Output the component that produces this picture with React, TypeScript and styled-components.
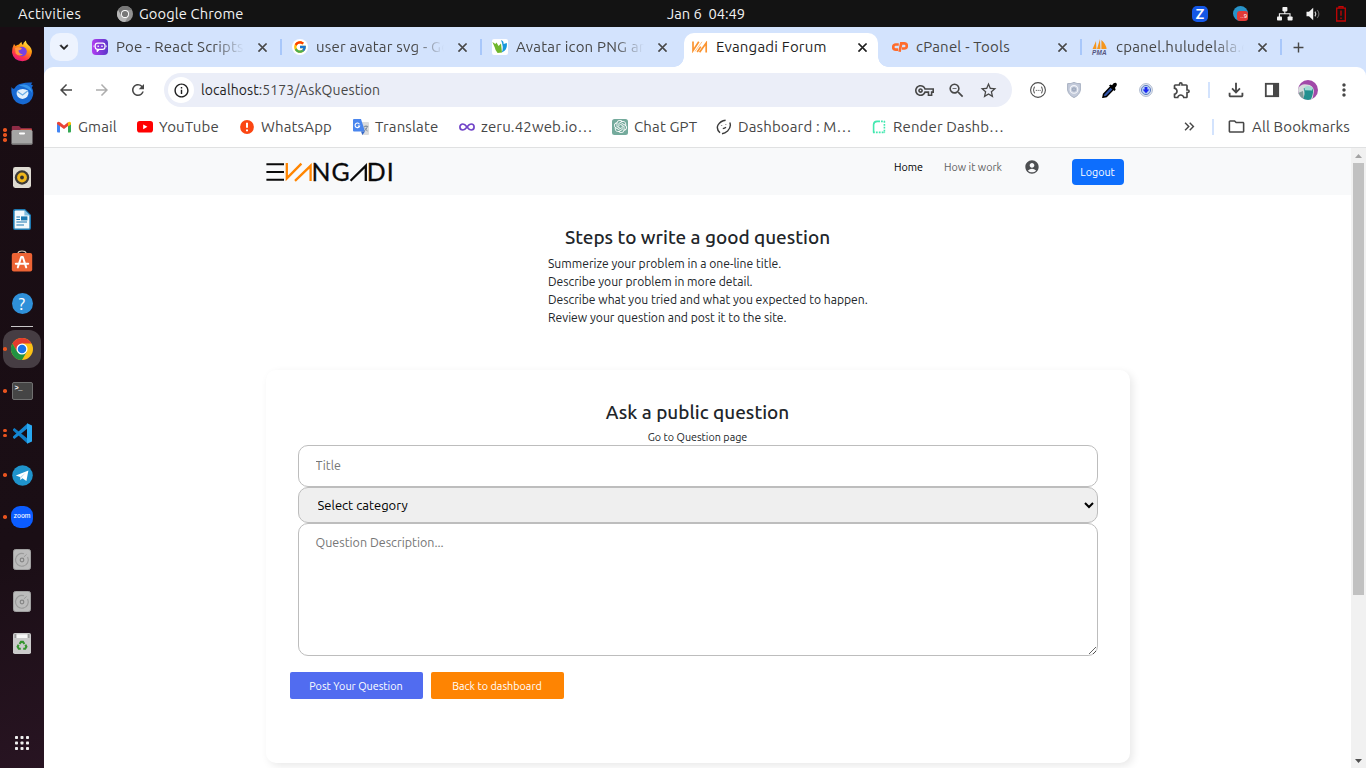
import React from "react";
import styled, { createGlobalStyle, css } from "styled-components";
import {
  MdArrowBack, MdArrowForward, MdRefresh, MdInfoOutline, MdOutlineVpnKey, MdOutlineZoomOut,
  MdStarOutline, MdOutlineExtension, MdOutlineFileDownload, MdMoreVert, MdAccountCircle,
  MdOutlineFolder, MdKeyboardDoubleArrowRight, MdClose, MdAdd, MdKeyboardArrowDown,
} from "react-icons/md";
import { FcGoogle } from "react-icons/fc";
import { SiOpenai } from "react-icons/si";

const GlobalStyle = createGlobalStyle`
  * { box-sizing: border-box; }
  body { margin: 0; overflow: hidden; background: #fff; }
  body, input, select, textarea, button { font-family: Ubuntu, "Noto Sans", "Open Sans", sans-serif; }
  svg { display: block; flex: none; }
`;

const Desktop = styled.div`
  width: 1366px; height: 768px; display: flex; flex-direction: column; overflow: hidden;
  font-size: 15px; letter-spacing: 0.14px; color: #474747;
`;

/* ---------- system bar ---------- */
const SystemBar = styled.header`
  height: 27px; flex: none; display: flex; align-items: center; background: #131313;
  color: #f2f2f2; font-size: 14.67px; white-space: pre;
`;
const SystemLeft = styled.div`
  width: 667px; padding-left: 18px; display: flex; align-items: center;
`;
const Activities = styled.span` width: 99px; letter-spacing: 0.3px; `;
const AppName = styled.span` margin-left: 6px; `;
const Clock = styled.span` letter-spacing: 0; `;
const Tray = styled.div`
  margin-left: auto; padding-right: 3px; display: flex; align-items: center;
`;
const TrayItem = styled.span<{ $w: number }>`
  width: ${p => p.$w}px; display: flex; justify-content: center;
`;

const Workspace = styled.div` flex: 1; min-height: 0; display: flex; `;

/* ---------- dock ---------- */
const DockBar = styled.nav`
  width: 44px; flex: none; padding: 3px 0 4px; display: flex; flex-direction: column;
  background: linear-gradient(165deg, #190d13 0%, #1a0e15 70%, #281422 100%);
`;
const DockItem = styled.div<{ $last?: boolean }>`
  position: relative; height: 42px; flex: none; display: flex; align-items: center; justify-content: center;
  ${p => p.$last && css`margin-top: auto;`}
`;
const DockTile = styled.span<{ $active?: boolean }>`
  width: 38px; height: 38px; border-radius: 12px; display: flex; align-items: center; justify-content: center;
  ${p => p.$active && css`background: #463d43;`}
`;
const RunDots = styled.span`
  position: absolute; left: 3px; top: 0; bottom: 0; display: flex; flex-direction: column;
  justify-content: center; gap: 1.5px;
`;
const RunDot = styled.i` width: 3.6px; height: 3.6px; border-radius: 50%; background: #e9541f; `;
const DockRule = styled.div` height: 1px; width: 22px; margin: 2px auto 1px; background: #c9c6c8; flex: none; `;

/* ---------- browser ---------- */
const Browser = styled.main` flex: 1; min-width: 0; display: flex; flex-direction: column; background: #d3e3fd; `;
const TabStrip = styled.div` height: 40px; flex: none; padding: 6px 0 0 6px; display: flex; letter-spacing: 0.2px; `;
const TabSearch = styled.button`
  width: 28px; height: 28px; margin-right: 6px; padding: 0; border: 0; border-radius: 10px; background: #edf3fe;
  display: flex; align-items: center; justify-content: center; color: #1f1f1f;
  path:not([fill="none"]) { stroke: currentColor; stroke-width: 1; }
`;
const TabBox = styled.div<{ $active?: boolean }>`
  position: relative; width: 194px; height: 34px; margin-right: 6px; padding: 0 8px 6px; display: flex; align-items: center;
  color: ${p => (p.$active ? "#1f1f1f" : "#474747")};
  ${p => p.$active && css`
    background: #fff; border-radius: 10px 10px 0 0;
    &::before, &::after { content: ""; position: absolute; bottom: 0; width: 10px; height: 10px; }
    &::before { left: -10px; background: radial-gradient(circle at 0 0, transparent 9.5px, #fff 10px); }
    &::after { right: -10px; background: radial-gradient(circle at 100% 0, transparent 9.5px, #fff 10px); }
  `}
`;
const TabLabel = styled.span<{ $fade?: boolean }>`
  width: 128px; margin: 0 11px 0 8px; overflow: hidden; white-space: nowrap; line-height: 22px;
  ${p => p.$fade && css`mask-image: linear-gradient(90deg, #000 calc(100% - 30px), transparent);`}
`;
const TabRule = styled.i` position: absolute; right: -4px; top: 6px; width: 2px; height: 16px; background: #a8c7fa; `;
const NewTab = styled.span` width: 28px; height: 28px; display: flex; align-items: center; justify-content: center; `;
const CloseIcon = styled(MdClose)`
  path:not([fill="none"]) { stroke: currentColor; stroke-width: 0.8; }
`;

const Toolbar = styled.div`
  height: 46px; flex: none; padding-left: 4px; display: flex; align-items: center; background: #fff;
  border-radius: 9px 9px 0 0;
`;
const ToolSlot = styled.span<{ $w?: number; $dim?: boolean }>`
  width: ${p => p.$w ?? 36}px; flex: none; display: flex; align-items: center; justify-content: center;
  color: ${p => (p.$dim ? "#adadad" : "#474747")};
`;
const AddressBar = styled.div`
  width: 848px; height: 34px; margin: 0 8px; padding: 0 8px 0 4px; display: flex; align-items: center;
  border-radius: 17px; background: #ebeef8;
`;
const SiteInfo = styled.span`
  width: 26px; height: 26px; border-radius: 50%; background: #fff; color: #1f1f1f;
  display: flex; align-items: center; justify-content: center;
`;
const Url = styled.span` flex: 1; padding-left: 7px; font-size: 14px; letter-spacing: 0.09px; color: #474747; `;
const UrlHost = styled.span` color: #1f1f1f; `;
const ToolRule = styled.i` width: 2px; height: 16px; background: #d3e3fd; `;

const Bookmarks = styled.div`
  height: 35px; flex: none; padding: 0 0 7px 12px; display: flex; align-items: center; background: #fff;
  border-bottom: 1px solid #e0e1e2;
`;
const Bookmark = styled.span<{ $w: number }>`
  width: ${p => p.$w}px; display: flex; align-items: center; gap: 6px; white-space: nowrap;
`;
const BookmarkTail = styled.div` margin-left: auto; padding-right: 15px; display: flex; align-items: center; `;
const AllBookmarks = styled.span` display: flex; align-items: center; gap: 6px; padding-left: 5px; width: 129px; white-space: nowrap; `;

const Viewport = styled.div` flex: 1; min-height: 0; display: flex; background: #fff; `;
const Page = styled.div`
  flex: 1; min-width: 0; overflow: hidden; background: #fff; color: #212529; font-size: 12.13px;
  line-height: 18px; letter-spacing: 0;
`;

/* ---------- scrollbar ---------- */
const ScrollTrack = styled.div` width: 15px; flex: none; display: flex; flex-direction: column; align-items: center; background: #f1f1f1; `;
const ScrollThumb = styled.div` width: 11px; height: 432px; background: #c1c1c1; `;
const ScrollArrow = styled.span<{ $down?: boolean }>`
  width: 15px; height: 15px; display: flex; align-items: center; justify-content: center; flex: none;
  ${p => p.$down && css`margin-top: auto;`}
`;

/* ---------- forum page ---------- */
const SiteNav = styled.div` height: 47px; background: #f8f9fa; `;
const Container = styled.div` width: 864px; margin: 0 auto; display: flex; `;
const NavBrand = styled.div` padding-top: 15px; width: 628.5px; height: 47px; `;
const NavLink = styled.a<{ $active?: boolean; $w: number }>`
  width: ${p => p.$w}px; padding-top: 10px; font-size: 10.75px; color: ${p => (p.$active ? "#000" : "#5f6061")};
`;
const NavUser = styled.span` width: 48px; padding-top: 11px; color: #4d4f51; `;
const LogoutButton = styled.button`
  width: 52px; height: 26px; margin-top: 11px; padding: 0; border: 0; border-radius: 4px; background: #0d6efd;
  color: #fff; font-size: 10.7px;
`;
const Steps = styled.section` width: 342px; margin: 31px auto 0; `;
const Heading = styled.h4`
  margin: 0 0 7px; font-size: 18.95px; line-height: 22px; font-weight: 500;
  text-align: center; white-space: nowrap;
`;
const StepList = styled.ul` list-style: none; margin: 0; padding: 0 0 0 21.5px; white-space: nowrap; `;
const Card = styled.section`
  width: 864px; height: 393px; margin: 43px auto 0; padding: 31px 32px 0; border-radius: 10px; background: #fff;
  box-shadow: 3px 3px 8px rgba(0, 0, 0, 0.09);
`;
const QuestionLink = styled.a` display: block; line-height: 15px; font-size: 10.75px; text-align: center; `;
const Fields = styled.form` display: flex; flex-direction: column; `;
const field = css`
  width: 800px; margin: 0; border: 1px solid #bdbdbd; border-radius: 10px; outline: none;
`;
const TitleInput = styled.input` ${field} height: 42px; padding: 0 17px 2px; font-size: 12.5px; background: #fff; `;
const CategorySelect = styled.select` ${field} height: 36px; padding: 0 0 0 15px; font-size: 13px; color: #000; background: #efefef; `;
const Description = styled.textarea` ${field} height: 133px; padding: 10px 17px; font-size: 12.5px; line-height: 17px; background: #fff; `;
const Actions = styled.div` display: flex; gap: 8px; margin: 16px 0 0 -8px; `;
const ActionButton = styled.button<{ $tone: "primary" | "accent" }>`
  width: 133px; height: 27px; padding: 0; border: 0; border-radius: 2px; color: #fff; font-size: 10.8px;
  background: ${p => (p.$tone === "primary" ? "#516cf0" : "#fe8402")};
`;

/* ---------- drawings ---------- */
const ChromeMark = ({ size, mono }: { size: number; mono?: boolean }) => (
  <svg width={size} height={size} viewBox="0 0 48 48">
    <circle cx="24" cy="24" r="24" fill={mono ? "#929292" : "#fbc116"} />
    <path d="M24 12 H44.8 A24 24 0 0 0 3.2 12 L13.6 30 L24 24 Z" fill={mono ? "#777" : "#e33b2e"} />
    <path d="M3.2 12 A24 24 0 0 0 24 48 L34.4 30 L13.6 30 Z" fill={mono ? "#b5b5b5" : "#229342"} />
    <circle cx="24" cy="24" r="12" fill="#fff" />
    <circle cx="24" cy="24" r="9.3" fill={mono ? "#777" : "#1a73e8"} />
  </svg>
);

const FirefoxMark = () => (
  <svg width="22" height="22" viewBox="0 0 22 22">
    <defs>
      <linearGradient id="ff" x1="0.8" y1="0" x2="0.3" y2="1">
        <stop offset="0" stopColor="#fff44f" /><stop offset=".4" stopColor="#ff980e" />
        <stop offset=".75" stopColor="#ff3647" /><stop offset="1" stopColor="#e31587" />
      </linearGradient>
    </defs>
    <path d="M3 4 L4.6 6 Q6 4.6 8 4.4 Q9 2.6 10.6 2 Q10.4 4 12 5 Q12.6 2.4 14.8 .6 Q15 3 17 4.8 Q21.4 8 20.8 13 Q19.6 20.6 11.4 21.2 Q2.4 21 1 12.6 Q.8 8 3 4Z" fill="url(#ff)" />
    <circle cx="11" cy="11.6" r="4.8" fill="#7542e5" />
    <path d="M4 8 Q8 6 11 8.6 Q10 10.4 7.4 10.4 Q8 14 12 14 Q8 17.4 4.6 13.4Z" fill="#ff9640" />
  </svg>
);
const ThunderbirdMark = () => (
  <svg width="23" height="23" viewBox="0 0 23 23">
    <path d="M.6 5 Q1.6 7.4 3.4 6.4 Q6 2 11 1.4 Q15 .2 21.4 .6 L20 2.4 L22 3.6 L20.8 5.4 Q23 9 22 13.6 Q20 21.6 12 22.4 Q3 21.6 1.2 13.6 Q-.2 9 .6 5Z" fill="#1769d2" />
    <path d="M8 3.4 Q15 .8 19 5 Q21 7.6 21 11 Q18 5.4 8 3.4Z" fill="#3796ee" />
    <path d="M6 9 Q11.4 5 17 8.6 Q18.4 13 15 15.8 Q11.4 18 8 15.8 Q4.6 13 6 9Z" fill="#e4f1fd" />
    <path d="M6.4 9.4 L11.6 13 L16.8 8.8" fill="none" stroke="#6aaee8" strokeWidth="1.2" />
  </svg>
);
const FilesMark = () => (
  <svg width="22" height="20" viewBox="0 0 22 20">
    <path d="M1.4 1 H8 L10 3 H20 Q21 3 21 4 V9 H.8 V2Z" fill="#8d2b45" />
    <path d="M10 4 H20.6 V8 H6Z" fill="#c4503f" />
    <rect x=".5" y="5" width="21" height="14.5" rx="1.6" fill="#a5a5a5" />
    <rect x=".5" y="18" width="21" height="1.6" rx=".8" fill="#858585" />
    <rect x="8" y="7.4" width="6" height="2" rx=".8" fill="#fff" />
  </svg>
);
const RhythmboxMark = () => (
  <svg width="18" height="21" viewBox="0 0 18 21">
    <rect width="18" height="21" rx="2.4" fill="#dedbd2" />
    <circle cx="9" cy="10.5" r="7.2" fill="#3c3a37" />
    <circle cx="9" cy="10.5" r="4.9" fill="#efb71b" />
    <circle cx="9" cy="10.5" r="1.9" fill="#33312e" />
  </svg>
);
const WriterMark = () => (
  <svg width="18" height="21" viewBox="0 0 18 21">
    <path d="M2 0 H12 L18 6 V19 Q18 21 16 21 H2 Q0 21 0 19 V2 Q0 0 2 0Z" fill="#1d79b1" />
    <path d="M2.4 1.6 H11.4 L16.4 6.4 V19.4 H1.6 V2.4Z" fill="#f4f9fc" />
    <path d="M11.4 1 L17 6.4 H11.4Z" fill="#83bedf" />
    <path d="M3.4 8 H7 M3.4 10.5 H7 M3.4 13 H14 M3.4 16 H11" stroke="#1d79b1" strokeWidth="1.2" />
    <rect x="8" y="7.4" width="6.4" height="4" fill="#1d79b1" />
  </svg>
);
const SoftwareMark = () => (
  <svg width="22" height="22" viewBox="0 0 22 22">
    <path d="M7 3 Q7.4 1 11 1 Q14.6 1 15 3" fill="none" stroke="#d9c9b6" strokeWidth="1.2" />
    <rect x=".8" y="3" width="20.4" height="18.4" rx="2" fill="#ed6435" />
    <path d="M6.8 17.4 L10.2 7 H11.8 L15.2 17.4 M4.8 13.8 H17.2" fill="none" stroke="#fff" strokeWidth="2" strokeLinejoin="round" strokeLinecap="round" />
  </svg>
);
const HelpBadge = styled.span`
  width: 21px; height: 21px; border-radius: 50%; background: #2f90d9; color: #fff; font-size: 17px; line-height: 21px; text-align: center;
`;
const TerminalTile = styled.span`
  width: 21px; height: 18px; padding: 1px 2px; border: 1px solid #707070; border-radius: 2px; background: #454545; color: #fff;
  font: bold 7px/8px "Liberation Mono", monospace; letter-spacing: -0.5px;
`;
const CodeMark = () => (
  <svg width="21" height="21" viewBox="0 0 21 21">
    <path d="M1 6.3 L2.4 5 L15.4 15.6 V20.4 L1 7.4Z" fill="#0f7dc7" />
    <path d="M1 14.7 L2.4 16 L15.4 5.4 V.6 L1 13.6Z" fill="#1588d4" />
    <path d="M15 .3 L20 2.4 V18.6 L15 20.7Z" fill="#29a9f2" />
  </svg>
);
const TelegramMark = () => (
  <svg width="21" height="21" viewBox="0 0 21 21">
    <circle cx="10.5" cy="10.5" r="10.3" fill="#1f93cc" />
    <path d="M3.8 10.4 L16.4 5.4 L14.4 16 L10.4 13.2 L8.4 15 L8 12Z" fill="#fff" />
    <path d="M8 12 L14 7.4 L9.4 12.6 L8.4 15Z" fill="#b8dbee" />
  </svg>
);
const ZoomBadge = styled.span`
  width: 22px; height: 22px; border-radius: 9px; background: #0b5cff; color: #fff; font: 500 6.4px/21px Inter, sans-serif;
  letter-spacing: 0; text-align: center;
`;
const DiskMark = () => (
  <svg width="18" height="21" viewBox="0 0 18 21">
    <rect x=".5" y=".5" width="17" height="20" rx="2" fill="#bcbcbc" stroke="#a0a0a0" />
    <path d="M14.6 8 A6.4 6.4 0 1 1 11 4.8" fill="none" stroke="#9a9a9a" strokeWidth="1.2" />
    <path d="M10.8 8 L13.6 5.4" stroke="#9a9a9a" strokeWidth="1" />
    <circle cx="9" cy="11" r="1.8" fill="none" stroke="#858585" strokeWidth="1.2" />
  </svg>
);
const TrashMark = () => (
  <svg width="18" height="21" viewBox="0 0 18 21">
    <rect width="18" height="21" rx="1.8" fill="#cbcbcb" />
    <path d="M1.5 1 H16.5 V5 H1.5Z" fill="#9b9b9b" /><path d="M3.4 1.2 H14.6 V5 H3.4Z" fill="#f7f7f7" />
    <path d="M6.6 11 L8 8.9 H10 L11.4 11 M12.4 11.6 L13.4 13.8 L12.2 15.8 H10.2 M7.8 15.8 H5.8 L4.6 13.8 L5.6 11.8" fill="none" stroke="#36952f" strokeWidth="2.1" />
  </svg>
);
const AppGrid = () => (
  <svg width="14" height="14" viewBox="0 0 14 14" fill="#f0f0f0">
    {[0, 5.5, 11].map(y => [0, 5.5, 11].map(x => <rect key={`${x}-${y}`} x={x} y={y} width="3" height="3" rx="0.8" />))}
  </svg>
);

const ZBadge = styled.span`
  width: 16px; height: 16px; border-radius: 5px; background: #1457e6; color: #fff; font: bold 14px/16px Lato, sans-serif; text-align: center;
`;
const ChatTray = styled.span` position: relative; width: 15px; height: 15px; border-radius: 50%; background: #2893c9; `;
const ChatCount = styled.b`
  position: absolute; left: 4px; top: 5px; width: 11px; height: 10px; border-radius: 3px; background: #e23a36; color: #fff;
  font: 6px/10px "Liberation Sans", sans-serif; letter-spacing: 0; text-align: right; padding-right: 1px;
`;
const NetworkMark = () => (
  <svg width="16" height="14" viewBox="0 0 16 14" fill="#f2f2f2">
    <rect x="5.4" width="5" height="4.4" rx=".8" /><rect y="9.4" width="5" height="4.2" rx=".8" /><rect x="10.6" y="9.4" width="5" height="4.2" rx=".8" />
    <path d="M2.4 10 V6.8 H13 V10 M7.8 4 V7" fill="none" stroke="#f2f2f2" strokeWidth="1.1" />
  </svg>
);
const SpeakerMark = () => (
  <svg width="15" height="14" viewBox="0 0 15 14">
    <path d="M.5 4.8 H3 L7.2 .8 V13.2 L3 9.2 H.5Z" fill="#f2f2f2" />
    <path d="M9 4.6 Q10.6 7 9 9.4" fill="none" stroke="#d2d2d2" strokeWidth="1.2" />
    <path d="M11.2 3 Q14.6 7 11.2 11" fill="none" stroke="#696969" strokeWidth="1.1" />
  </svg>
);
const BatteryMark = () => (
  <svg width="10" height="16" viewBox="0 0 10 16">
    <path d="M3 2 V.7 H7 V2 M.7 2.2 H9.3 V15 H.7Z M5 4.6 V9.8 M5 11.4 V13" fill="none" stroke="#c30505" strokeWidth="1.3" />
  </svg>
);

const PoeMark = () => (
  <svg width="16" height="16" viewBox="0 0 16 16">
    <defs><linearGradient id="poe" x1="0" y1="0" x2="1" y2="0"><stop stopColor="#b03df0" /><stop offset="1" stopColor="#5b36c9" /></linearGradient></defs>
    <rect width="16" height="16" rx="4" fill="url(#poe)" />
    <rect x="3.2" y="4.2" width="9.8" height="6.2" rx="2.4" fill="none" stroke="#fff" strokeWidth="1.2" />
    <path d="M2 6.4 V8.2 M14.2 6.4 V8.2 M5 10.6 V12.8 L7.4 10.8" fill="#fff" stroke="#fff" strokeWidth=".8" />
    <path d="M6.2 6.6 V8 M10 6.6 V8" stroke="#fff" strokeWidth="1.3" />
  </svg>
);
const GoogleDisc = styled.span` width: 16px; height: 16px; border-radius: 50%; background: #fff; display: flex; align-items: center; justify-content: center; `;
const BirdMark = () => (
  <svg width="16" height="16" viewBox="0 0 16 16">
    <rect width="16" height="16" rx="2" fill="#fff" />
    <path d="M.4 3 L3.4 5 L4.4 3.6 L6.6 7 L9 4.6 L10 13.4 L5.6 14 Q3 11 2.8 8.6Z" fill="#6fb62c" />
    <path d="M9 1 Q12 2 11.6 5 L14.8 4 Q15.6 9 12.6 11.8 L9.8 13.6 Q12 8 9 1Z" fill="#1798dc" />
  </svg>
);
const ForumMark = () => (
  <svg width="16" height="12" viewBox="0 0 16 12">
    <path d="M1 .4 V9.6 L6.8 .8 M5.2 11 L8.8 5.6 M7.6 11.2 L14.2 2 V11.4" fill="none" stroke="#fb9430" strokeWidth="1.7" />
    <path d="M3 10.4 L10 .8" stroke="#fdbd7d" strokeWidth=".9" />
  </svg>
);
const CpanelMark = () => (
  <svg width="16" height="12" viewBox="0 0 17 12">
    <path d="M7.2 3.4 H4 A2.7 2.7 0 0 0 4 8.8 H6.4 M8 11 L9.8 2.2 H13 A2.7 2.7 0 0 1 13 7.6 H10.6" fill="none" stroke="#ff6c2c" strokeWidth="2.8" />
  </svg>
);
const SailMark = () => (
  <svg width="16" height="16" viewBox="0 0 16 16" overflow="visible">
    <path d="M4 2 L4.4 10 H.6Z M8 0 L8.4 10 H5Z M9.4 1 Q14 5 14.6 10 H9.4Z" fill="#f5961d" />
    <text x="0" y="15.8" fontFamily="Liberation Sans, sans-serif" fontWeight="700" fontStyle="italic" fontSize="6.4" fill="#55567f">PMA</text>
  </svg>
);

const GmailMark = () => (
  <svg width="16" height="12" viewBox="0 0 16 12">
    <path d="M1 2.4 H4 V11.4 H2 Q1 11.4 1 10.4Z" fill="#4285f4" /><path d="M12 2.4 H15 V10.4 Q15 11.4 14 11.4 H12Z" fill="#34a853" />
    <path d="M1 1.8 Q2.2 0 4 1.2 L8 4.4 L12 1.2 V5 L8 8 L1 3Z" fill="#ea4335" /><path d="M12 1.2 Q14 0 15 1.8 V3.4 L12 5.4Z" fill="#fbbc04" />
  </svg>
);
const YoutubeMark = () => (
  <svg width="16" height="12" viewBox="0 0 16 12"><rect width="16" height="11.6" rx="2.8" fill="#f00" /><path d="M6.2 3.4 V8.2 L10.4 5.8Z" fill="#fff" /></svg>
);
const AlertMark = () => (
  <svg width="16" height="16" viewBox="0 0 16 16">
    <circle cx="8" cy="8" r="6.9" fill="#fb4613" /><path d="M8 3.8 V8.8 M8 10.4 V12.2" stroke="#fff" strokeWidth="2" />
  </svg>
);
const TranslateMark = () => (
  <svg width="16" height="16" viewBox="0 0 16 16">
    <path d="M7 3 H15 Q16 3 16 4 V15 Q16 16 15 16 H9Z" fill="#dcdcdc" />
    <path d="M0 1 Q0 0 1 0 H8 L12 12.6 H1 Q0 12.6 0 11.6Z" fill="#4a86ee" /><path d="M8 12.6 H12 L9.4 16Z" fill="#3367c8" />
    <path d="M6.4 5.2 A2.3 2.3 0 1 0 6.6 7 H4.8" fill="none" stroke="#fff" strokeWidth="1.1" />
    <path d="M10.8 7.4 H15.2 M13 6.4 V7.4 M14.4 7.6 Q13.6 10.6 11.2 12 M11.6 8.6 Q12.6 11 14.6 12" fill="none" stroke="#7b8896" strokeWidth=".9" />
  </svg>
);
const LoopMark = () => (
  <svg width="16" height="16" viewBox="0 0 16 16">
    <path d="M8 8 Q5.8 5 3.9 5 A3 3 0 0 0 3.9 11 Q5.8 11 8 8 Q10.2 5 12.1 5 A3 3 0 0 1 12.1 11 Q10.2 11 8 8Z" fill="none" stroke="#7144c8" strokeWidth="1.7" />
  </svg>
);
const GptTile = styled.span` width: 16px; height: 16px; border-radius: 2.5px; background: #74aa9c; color: #fff; display: flex; align-items: center; justify-content: center; `;
const FaceMark = () => (
  <svg width="16" height="16" viewBox="0 0 16 16" fill="none" stroke="#3b3b3b" strokeWidth="1.4">
    <path d="M4 13.8 Q0 10 2 6 Q4.4 1.8 9.6 1.2" /><path d="M13.8 3.6 Q15.6 8 11.6 12 Q9 14.2 6 14.8" />
    <path d="M5.6 6.4 V6.9 M9.8 5.6 V6.1 M6.8 9.6 Q8.6 9.4 10 8.2" strokeWidth="1.3" />
  </svg>
);
const RenderMark = () => (
  <svg width="16" height="16" viewBox="0 0 16 16" fill="none" stroke="#43e8b0" strokeWidth="1.6">
    <path d="M2.6 13.4 V5.6 Q2.8 2.6 6 2.4 H9" /><path d="M10 2.4 H13.6 M13.4 2 V14 M2 13.4 H14" strokeDasharray="1.8 1.1" />
  </svg>
);

const BracesMark = () => (
  <svg width="16" height="16" viewBox="0 0 16 16" fill="none" stroke="#4d4d4d">
    <circle cx="8" cy="8" r="7.4" strokeWidth="1.1" />
    <path d="M5 4.8 Q4 4.8 4 6 Q4 8 3 8 Q4 8 4 10 Q4 11.2 5 11.2 M11 4.8 Q12 4.8 12 6 Q12 8 13 8 Q12 8 12 10 Q12 11.2 11 11.2" />
    <path d="M5.8 8.4 H10.6" strokeDasharray="1 .9" />
  </svg>
);
const ShieldMark = () => (
  <svg width="14" height="16" viewBox="0 0 14 16" fill="none">
    <path d="M.6 1.6 Q4 2 7 .4 Q10 2 13.4 1.6 V8 Q12.6 13 7 15.6 Q1.4 13 .6 8Z" fill="#c3cada" stroke="#a2acbd" strokeWidth=".9" />
    <circle cx="7" cy="7.4" r="3.8" stroke="#f4f6fa" strokeWidth="1.1" /><circle cx="7" cy="7.4" r="1.7" fill="#b1bacb" stroke="#8794aa" strokeWidth=".6" />
  </svg>
);
const DropperMark = () => (
  <svg width="16" height="16" viewBox="0 0 16 16">
    <path d="M1 15.2 L1.6 12.2 L8.6 4.8 L11.4 7.4 L4.4 14.6Z" fill="#3255a8" stroke="#000" strokeWidth="1.5" />
    <path d="M7 3.4 L8.6 2.4 L10 3.2 Q12 .2 14.2 1 Q16 2.8 13 5.8 L13.6 7.8 L12.4 9Z" fill="#000" />
  </svg>
);
const DownDiscMark = () => (
  <svg width="16" height="16" viewBox="0 0 16 16">
    <circle cx="8" cy="8" r="6.4" fill="#e8ecf6" stroke="#9aa8c2" strokeWidth=".8" /><circle cx="8" cy="8" r="4.6" fill="#b4cdf5" stroke="#5f7fc0" />
    <path d="M6.6 5 H9.4 V7.4 H11.4 L8 11.2 L4.6 7.4 H6.6Z" fill="#1c28f0" />
  </svg>
);
const PanelMark = () => (
  <svg width="16" height="16" viewBox="0 0 16 16"><rect x="1.8" y="1.8" width="12.4" height="12.4" fill="none" stroke="#474747" strokeWidth="1.8" /><rect x="9" y="1.8" width="5" height="12.4" fill="#474747" /></svg>
);
const ProfileMark = () => (
  <svg width="20" height="20" viewBox="0 0 20 20">
    <defs><clipPath id="face"><circle cx="10" cy="10" r="10" /></clipPath></defs>
    <g clipPath="url(#face)">
      <rect width="20" height="20" fill="#a14aa9" />
      <path d="M0 8 Q4 3 9 4.6 Q15 5 16 11 L14.4 20 H0Z" fill="#d6dcdc" />
      <path d="M0 13 L5 11 L6 20 H2Z" fill="#7f9a98" />
      <path d="M5.6 8.6 Q10 5 15 9 Q15.6 14 12.6 20 H5 Q7.6 13 5.6 8.6Z" fill="#23908f" />
      <path d="M6.6 7 Q11 4.6 15 8 L14 10.4 L6.8 10.2Z" fill="#a3dcd4" />
    </g>
  </svg>
);

const BrandMark = () => (
  <svg width="130" height="28" viewBox="0 0 130 28" overflow="visible" role="img" aria-label="Evangadi">
    <path d="M0.4 1.2 H18 M0.4 9 H18 M0.4 16.8 H18" stroke="#0a0a0a" strokeWidth="2.1" />
    <path d="M20.8 0 V15.4 L35.4 .6 M29 17.8 L44.6 2.8 V18" fill="none" stroke="#ff8500" strokeWidth="2.3" />
    <path d="M84.6 17.8 L99.8 2.8 V18" fill="none" stroke="#0a0a0a" strokeWidth="2.3" />
    <g fontFamily="Lato, sans-serif" fontSize="24.8" fill="#0a0a0a" stroke="#0a0a0a" strokeWidth="0.3">
      <text x="45.6" y="17.9">N</text><text x="65.6" y="17.9">G</text><text x="100.8" y="17.9">D</text><text x="120.8" y="17.9">I</text>
    </g>
  </svg>
);

/* ---------- data ---------- */
const tabs = [
  { label: "Poe - React Scripts E", icon: <PoeMark />, fade: true, rule: true },
  { label: "user avatar svg - Go", icon: <GoogleDisc><FcGoogle size={14} /></GoogleDisc>, fade: true, rule: true },
  { label: "Avatar icon PNG an", icon: <BirdMark />, fade: true },
  { label: "Evangadi Forum", icon: <ForumMark />, active: true },
  { label: "cPanel - Tools", icon: <CpanelMark />, rule: true },
  { label: "cpanel.huludelala.c", icon: <SailMark />, fade: true, rule: true },
];
const bookmarks = [
  { label: "Gmail", w: 81, icon: <GmailMark /> },
  { label: "YouTube", w: 102, icon: <YoutubeMark /> },
  { label: "WhatsApp", w: 114, icon: <AlertMark /> },
  { label: "Translate", w: 106, icon: <TranslateMark /> },
  { label: "zeru.42web.io…", w: 153, icon: <LoopMark /> },
  { label: "Chat GPT", w: 104, icon: <GptTile><SiOpenai size={13} /></GptTile> },
  { label: "Dashboard : M…", w: 155, icon: <FaceMark /> },
  { label: "Render Dashb…", w: 150, icon: <RenderMark /> },
];
const dockTop = [
  { icon: <FirefoxMark />, dots: 0 }, { icon: <ThunderbirdMark />, dots: 0 }, { icon: <FilesMark />, dots: 3 },
  { icon: <RhythmboxMark />, dots: 0 }, { icon: <WriterMark />, dots: 0 }, { icon: <SoftwareMark />, dots: 0 },
  { icon: <HelpBadge>?</HelpBadge>, dots: 0 },
];
const dockRunning = [
  { icon: <ChromeMark size={22} />, dots: 1, active: true }, { icon: <TerminalTile>&gt;_</TerminalTile>, dots: 1 },
  { icon: <CodeMark />, dots: 2 }, { icon: <TelegramMark />, dots: 1 }, { icon: <ZoomBadge>zoom</ZoomBadge>, dots: 1 },
  { icon: <DiskMark />, dots: 0 }, { icon: <DiskMark />, dots: 0 }, { icon: <TrashMark />, dots: 0 },
];
const steps = [
  "Summerize your problem in a one-line title.",
  "Describe your problem in more detail.",
  "Describe what you tried and what you expected to happen.",
  "Review your question and post it to the site.",
];

type DockEntryProps = { icon: React.ReactNode; dots: number; active?: boolean };
const DockEntry = ({ icon, dots, active }: DockEntryProps) => (
  <DockItem>
    {dots > 0 && <RunDots>{Array.from({ length: dots }, (_, i) => <RunDot key={i} />)}</RunDots>}
    <DockTile $active={active}>{icon}</DockTile>
  </DockItem>
);

export default function App() {
  return (
    <Desktop>
      <GlobalStyle />
      <SystemBar>
        <SystemLeft>
          <Activities>Activities</Activities>
          <ChromeMark size={16} mono />
          <AppName>Google Chrome</AppName>
        </SystemLeft>
        <Clock>Jan 6  04:49</Clock>
        <Tray>
          <TrayItem $w={40}><ZBadge>Z</ZBadge></TrayItem>
          <TrayItem $w={41}><ChatTray><ChatCount>..9</ChatCount></ChatTray></TrayItem>
          <TrayItem $w={47}><NetworkMark /></TrayItem>
          <TrayItem $w={11}><SpeakerMark /></TrayItem>
          <TrayItem $w={44}><BatteryMark /></TrayItem>
        </Tray>
      </SystemBar>
      <Workspace>
        <DockBar>
          {dockTop.map((d, i) => <DockEntry key={i} {...d} />)}
          <DockRule />
          {dockRunning.map((d, i) => <DockEntry key={i} {...d} />)}
          <DockItem $last><AppGrid /></DockItem>
        </DockBar>
        <Browser>
          <TabStrip>
            <TabSearch><MdKeyboardArrowDown size={16} /></TabSearch>
            {tabs.map(t => (
              <TabBox key={t.label} $active={t.active}>
                {t.icon}
                <TabLabel $fade={t.fade}>{t.label}</TabLabel>
                <CloseIcon size={15} />
                {t.rule && <TabRule />}
              </TabBox>
            ))}
            <NewTab><MdAdd size={17} /></NewTab>
          </TabStrip>
          <Toolbar>
            <ToolSlot><MdArrowBack size={18} /></ToolSlot>
            <ToolSlot $dim><MdArrowForward size={18} /></ToolSlot>
            <ToolSlot><MdRefresh size={18} /></ToolSlot>
            <AddressBar>
              <SiteInfo><MdInfoOutline size={17} /></SiteInfo>
              <Url><UrlHost>localhost</UrlHost>:5173/AskQuestion</Url>
              <ToolSlot $w={32}><MdOutlineVpnKey size={19} /></ToolSlot>
              <ToolSlot $w={32}><MdOutlineZoomOut size={19} /></ToolSlot>
              <ToolSlot $w={32}><MdStarOutline size={19} /></ToolSlot>
            </AddressBar>
            <ToolSlot><BracesMark /></ToolSlot>
            <ToolSlot><ShieldMark /></ToolSlot>
            <ToolSlot><DropperMark /></ToolSlot>
            <ToolSlot><DownDiscMark /></ToolSlot>
            <ToolSlot><MdOutlineExtension size={20} /></ToolSlot>
            <ToolSlot $w={18}><ToolRule /></ToolSlot>
            <ToolSlot><MdOutlineFileDownload size={22} /></ToolSlot>
            <ToolSlot><PanelMark /></ToolSlot>
            <ToolSlot><ProfileMark /></ToolSlot>
            <ToolSlot><MdMoreVert size={20} /></ToolSlot>
          </Toolbar>
          <Bookmarks>
            {bookmarks.map(b => <Bookmark key={b.label} $w={b.w}>{b.icon}<span>{b.label}</span></Bookmark>)}
            <BookmarkTail>
              <ToolSlot $w={30}><MdKeyboardDoubleArrowRight size={17} /></ToolSlot>
              <ToolSlot $w={18}><ToolRule /></ToolSlot>
              <AllBookmarks><MdOutlineFolder size={19} /><span>All Bookmarks</span></AllBookmarks>
            </BookmarkTail>
          </Bookmarks>
          <Viewport>
            <Page>
              <SiteNav>
                <Container>
                  <NavBrand><BrandMark /></NavBrand>
                  <NavLink $active $w={50}>Home</NavLink>
                  <NavLink $w={79.5}>How it work</NavLink>
                  <NavUser><MdAccountCircle size={16} /></NavUser>
                  <LogoutButton>Logout</LogoutButton>
                </Container>
              </SiteNav>
              <Steps>
                <Heading>Steps to write a good question</Heading>
                <StepList>{steps.map(s => <li key={s}>{s}</li>)}</StepList>
              </Steps>
              <Card>
                <Heading>Ask a public question</Heading>
                <QuestionLink>Go to Question page</QuestionLink>
                <Fields>
                  <TitleInput placeholder="Title" />
                  <CategorySelect defaultValue=""><option value="">Select category</option></CategorySelect>
                  <Description placeholder="Question Description..." />
                  <Actions>
                    <ActionButton type="button" $tone="primary">Post Your Question</ActionButton>
                    <ActionButton type="button" $tone="accent">Back to dashboard</ActionButton>
                  </Actions>
                </Fields>
              </Card>
            </Page>
            <ScrollTrack>
              <ScrollArrow><svg width="7" height="4" viewBox="0 0 7 4"><path d="M0 4 L3.5 0 L7 4Z" fill="#a3a3a3" /></svg></ScrollArrow>
              <ScrollThumb />
              <ScrollArrow $down><svg width="7" height="4" viewBox="0 0 7 4"><path d="M0 0 L3.5 4 L7 0Z" fill="#505050" /></svg></ScrollArrow>
            </ScrollTrack>
          </Viewport>
        </Browser>
      </Workspace>
    </Desktop>
  );
}
